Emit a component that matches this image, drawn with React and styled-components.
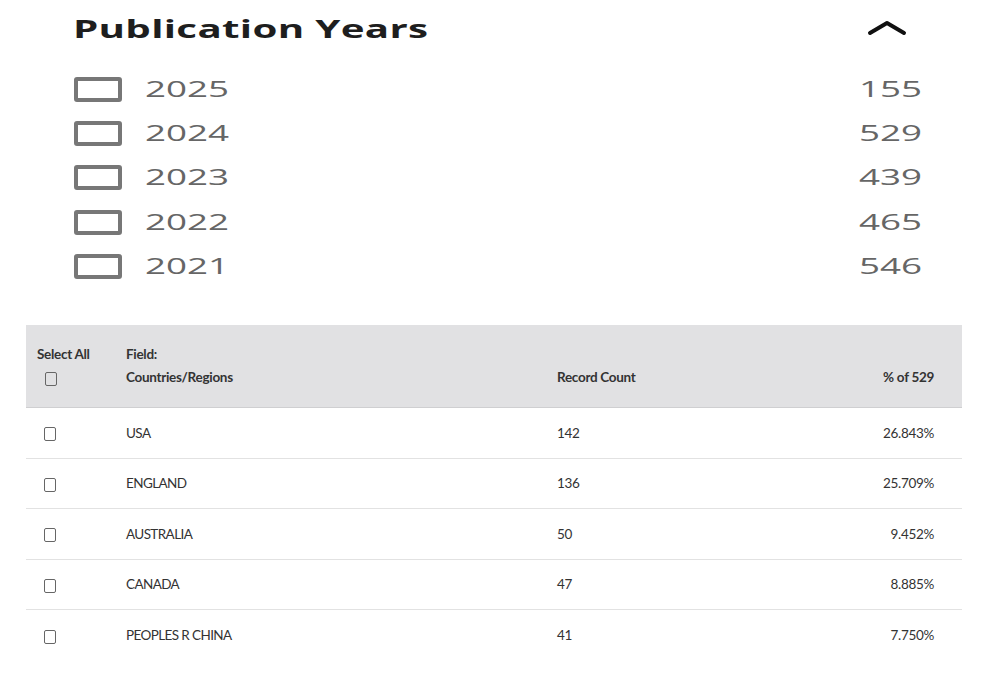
import React from "react";
import styled, { createGlobalStyle } from "styled-components";

const Global = createGlobalStyle`
  html, body { margin: 0; padding: 0; background: #fff; }
  body { font-family: "Open Sans", "DejaVu Sans", sans-serif; }
`;

const Page = styled.div`
  width: 996px;
  height: 676px;
  overflow: hidden;
  display: flex;
  flex-direction: column;
`;

const Facet = styled.section`
  margin-left: 74px;
  width: 848px;
  display: flex;
  flex-direction: column;
`;

const FacetHeader = styled.div`
  height: 56px;
  display: flex;
  align-items: center;
  justify-content: space-between;
  padding-right: 15px;
`;

const Stretch = styled.span`
  display: inline-block;
  transform: scaleX(${(p) => p.$sx});
  transform-origin: ${(p) => p.$origin || "left"} center;
  white-space: nowrap;
`;

const Title = styled.h2`
  margin: 0 0 0 -1px;
  font-size: 25px;
  font-weight: 700;
  color: #1e1e1e;
  letter-spacing: 0.2px;
  line-height: 1;
`;

const YearList = styled.div`
  display: flex;
  flex-direction: column;
  margin-top: 11px;
`;

const YearRow = styled.div`
  height: 44.3px;
  display: flex;
  align-items: center;
  justify-content: space-between;
`;

const YearLeft = styled.div`
  display: flex;
  align-items: center;
  gap: 23px;
`;

const BigBox = styled.span`
  box-sizing: border-box;
  width: 48px;
  height: 25px;
  border: 4px solid #777;
  border-radius: 3px;
  background: #fff;
`;

const YearText = styled.span`
  font-size: 21px;
  color: #666;
  line-height: 1;
`;

const Table = styled.div`
  margin: 37px 0 0 26px;
  width: 936px;
  font-family: "Lato", "Liberation Sans", sans-serif;
  color: #333;
`;

const Row = styled.div`
  display: grid;
  grid-template-columns: 89px 431px 1fr auto;
  align-items: ${(p) => (p.$head ? "end" : "center")};
  padding: ${(p) => (p.$head ? "18px 28px 18px 11px" : "0 28px 0 11px")};
  height: ${(p) => (p.$head ? "auto" : "50.5px")};
  box-sizing: border-box;
  background: ${(p) => (p.$head ? "#e1e1e3" : "#fff")};
  border-bottom: ${(p) => (p.$last ? "none" : p.$head ? "1.5px solid #cfcfd1" : "1px solid #e2e2e2")};
  font-size: 13.5px;
  font-weight: ${(p) => (p.$head ? 700 : 400)};
  letter-spacing: -0.3px;
`;

const HeadCell = styled.div`
  display: flex;
  flex-direction: column;
  line-height: 23px;
`;

const Cell = styled.div`
  line-height: 23px;
  text-align: ${(p) => (p.$right ? "right" : "left")};
  letter-spacing: ${(p) => (p.$caps ? "-0.6px" : "inherit")};
`;

const SmallBox = styled.span`
  box-sizing: border-box;
  display: inline-block;
  width: 12px;
  height: 14px;
  border: 1.5px solid #666;
  border-radius: 2px;
  margin-left: ${(p) => p.$ml || 0}px;
  vertical-align: middle;
`;

const Chevron = () => (
  <svg width="40" height="16" viewBox="0 0 40 16">
    <polyline
      points="3,13 20,3 37,13"
      fill="none"
      stroke="#111"
      strokeWidth="4"
      strokeLinecap="round"
      strokeLinejoin="round"
    />
  </svg>
);

const years = [
  ["2025", "155"],
  ["2024", "529"],
  ["2023", "439"],
  ["2022", "465"],
  ["2021", "546"],
];

const rows = [
  ["USA", "142", "26.843%"],
  ["ENGLAND", "136", "25.709%"],
  ["AUSTRALIA", "50", "9.452%"],
  ["CANADA", "47", "8.885%"],
  ["PEOPLES R CHINA", "41", "7.750%"],
];

export default function App() {
  return (
    <Page>
      <Global />
      <Facet>
        <FacetHeader>
          <Title>
            <Stretch $sx={1.61}>Publication Years</Stretch>
          </Title>
          <Chevron />
        </FacetHeader>
        <YearList>
          {years.map(([y, c]) => (
            <YearRow key={y}>
              <YearLeft>
                <BigBox />
                <YearText>
                  <Stretch $sx={1.75}>{y}</Stretch>
                </YearText>
              </YearLeft>
              <YearText>
                <Stretch $sx={1.75} $origin="right">{c}</Stretch>
              </YearText>
            </YearRow>
          ))}
        </YearList>
      </Facet>
      <Table>
        <Row $head>
          <HeadCell>
            <span>Select All</span>
            <span>
              <SmallBox $ml={8} />
            </span>
          </HeadCell>
          <HeadCell>
            <span>Field:</span>
            <span>Countries/Regions</span>
          </HeadCell>
          <Cell>Record Count</Cell>
          <Cell $right>% of 529</Cell>
        </Row>
        {rows.map(([n, c, p], i) => (
          <Row key={n} $last={i === rows.length - 1}>
            <Cell>
              <SmallBox $ml={7} />
            </Cell>
            <Cell $caps>{n}</Cell>
            <Cell>{c}</Cell>
            <Cell $right>{p}</Cell>
          </Row>
        ))}
      </Table>
    </Page>
  );
}
